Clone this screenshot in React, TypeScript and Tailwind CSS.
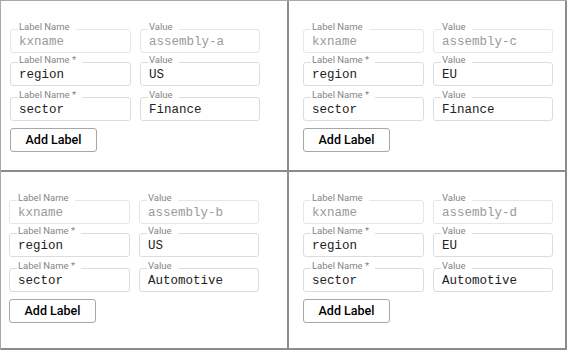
type Row = { name: string; value: string; locked?: boolean; required?: boolean };

interface PanelProps {
  rows: Row[];
  className: string;
}

function Field({ label, value, locked }: { label: string; value: string; locked?: boolean }) {
  return (
    <div
      className={`relative h-[24px] rounded-[3px] border flex items-center pl-[8px] pt-[2px] ${
        locked ? 'border-[#e6e6e6] text-[#9a9a9a]' : 'border-[#dcdcdc] text-[#222]'
      }`}
    >
      <span className="absolute left-[7px] top-[-9px] bg-white pl-[1px] pr-[6px] text-[9.5px] leading-[11px] text-[#858585] font-['Roboto',sans-serif]">
        {label}
      </span>
      <span className="text-[12.5px] font-['Liberation_Mono',monospace] leading-none">{value}</span>
    </div>
  );
}

function Panel({ rows, className }: PanelProps) {
  return (
    <div className={`border-r-2 border-b-2 border-[#8c8c8c] ${className}`}>
      {rows.map((r, i) => (
        <div
          key={i}
          className={`grid grid-cols-[121px_120px] gap-[9px] ${
            i === 0 ? 'mt-[28px]' : i === 1 ? 'mt-[9px]' : 'mt-[11px]'
          }`}
        >
          <Field label={r.required ? 'Label Name *' : 'Label Name'} value={r.name} locked={r.locked} />
          <Field label="Value" value={r.value} locked={r.locked} />
        </div>
      ))}
      <button className="mt-[7px] w-[87px] h-[24px] rounded-[3px] border border-[#a8a8a8] bg-white text-[12.5px] font-medium text-black font-['Roboto',sans-serif]">
        Add Label
      </button>
    </div>
  );
}

const data: { assembly: string; region: string; sector: string }[] = [
  { assembly: 'assembly-a', region: 'US', sector: 'Finance' },
  { assembly: 'assembly-c', region: 'EU', sector: 'Finance' },
  { assembly: 'assembly-b', region: 'US', sector: 'Automotive' },
  { assembly: 'assembly-d', region: 'EU', sector: 'Automotive' },
];

export default function App() {
  const rowsFor = (d: (typeof data)[number]): Row[] => [
    { name: 'kxname', value: d.assembly, locked: true },
    { name: 'region', value: d.region, required: true },
    { name: 'sector', value: d.sector, required: true },
  ];

  return (
    <div className="w-[569px] h-[352px] bg-white">
      <div className="w-[567px] grid grid-cols-[288px_278px] border-l border-t border-[#a8a8a8]">
        <Panel rows={rowsFor(data[0])} className="h-[171px] pl-[9px]" />
        <Panel rows={rowsFor(data[1])} className="h-[171px] pl-[14px]" />
        <Panel rows={rowsFor(data[2])} className="h-[178px] pl-[8px]" />
        <Panel rows={rowsFor(data[3])} className="h-[178px] pl-[14px]" />
      </div>
    </div>
  );
}
